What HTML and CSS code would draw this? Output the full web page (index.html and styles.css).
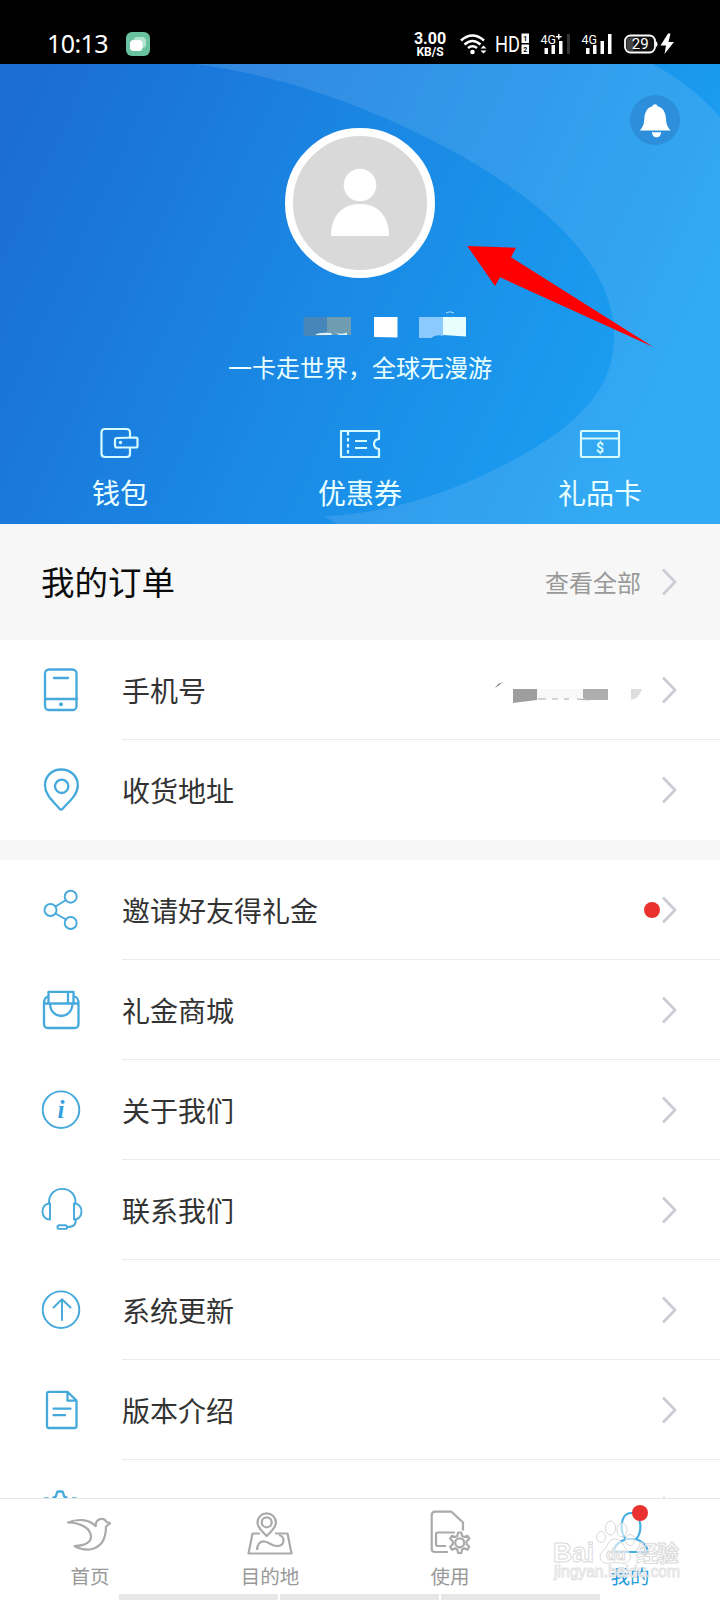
FILE: index.html
```html
<!DOCTYPE html>
<html lang="zh-CN">
<head>
<meta charset="utf-8">
<title>我的</title>
<link rel="stylesheet" href="styles.css">
</head>
<body>
<div class="screen">
  <header class="status">
    <span class="clock">10:13</span>
    <svg class="app-badge" viewBox="0 0 24 24"><rect width="24" height="24" rx="6" fill="#68c2a0"/><rect x="7.500" y="5" width="12.500" height="11" rx="4" fill="#aee3cd"/><rect x="4" y="8" width="12.500" height="11" rx="3.500" fill="#fff"/></svg>
    <div class="speed"><b class="speed-num">3.00</b><b class="speed-unit">KB/S</b></div>
    <svg class="signals" viewBox="0 0 216 24" fill="#fff">
      <g fill="none" stroke="#fff" stroke-width="2.600"><path d="M1 8.500Q12.500-1.500 24 8.500"/><path d="M4.500 12.500Q12.500 5.500 20.500 12.500"/><path d="M8 16Q12.500 12.500 17 16"/></g>
      <circle cx="12.500" cy="20" r="2.300"/><path d="M20.500 16.500l3-3 3 3zM20.500 18.500l3 3 3-3z"/>
      <text x="35" y="20" class="sig-hd" textLength="25" lengthAdjust="spacingAndGlyphs">HD</text>
      <rect x="61.500" y="1.500" width="7.500" height="9.500"/><rect x="61.500" y="12.500" width="7.500" height="9.500"/>
      <text x="63.300" y="8.800" class="sig-sim">1</text><text x="63.300" y="19.800" class="sig-sim">2</text>
      <text x="80.500" y="11.500" class="sig-gen" textLength="15.500" lengthAdjust="spacingAndGlyphs">4G</text><path d="M96 4h5.500v1.500h-5.500zM98 2h1.500v5.500h-1.500z"/>
      <rect x="84.500" y="16" width="3.500" height="6"/><rect x="91.500" y="13" width="3.500" height="9"/><rect x="99" y="9" width="3.500" height="13"/><rect x="107" y="2" width="3" height="20" fill="#333"/>
      <text x="121.500" y="11.500" class="sig-gen" textLength="15.500" lengthAdjust="spacingAndGlyphs">4G</text>
      <rect x="126" y="16" width="3.500" height="6"/><rect x="133" y="13" width="3.500" height="9"/><rect x="140.500" y="9" width="3.500" height="13"/><rect x="148" y="2" width="3.500" height="20"/>
      <rect x="165" y="3.500" width="30" height="17" rx="5.500" fill="#111" stroke="#fff" stroke-width="1.800"/><path d="M166.500 9q0-3.500 4-3.500h3v13.500h-3q-4 0-4-3.500z" fill="#444"/><path d="M195.500 9q2 .5 2 3.200t-2 3.200z"/>
      <text x="180.200" y="17.200" text-anchor="middle" class="sig-bat">29</text>
      <path d="M208 1.500L200.500 13.500h5.500l-1.500 8.500L214 10h-5.500l2-8.500z"/>
    </svg>
  </header>

  <section class="hero">
    <svg class="hero-bg" viewBox="0 64 720 460">
      <defs><linearGradient id="base" gradientUnits="userSpaceOnUse" x1="0" y1="120" x2="650" y2="420"><stop offset="0" stop-color="#1b6cd3"/><stop offset=".5" stop-color="#1a88e4"/><stop offset="1" stop-color="#1aa0f3"/></linearGradient></defs>
      <rect y="64" width="720" height="460" fill="url(#base)"/>
      <path fill="#fff" fill-opacity=".105" d="M195 64H653Q693 86 720 117V524H337L324 516C414 514 510 467 560 431C596 402 614 376 614 335C614 270 555 206 447 148C370 107 285 76 195 64Z"/>
    </svg>
    <div class="bell"><svg class="bell-icon" viewBox="0 0 49 49"><path d="M24.500 9c1.300 0 2.300.8 2.500 2 6 1.500 8 7 8.300 12.500.3 5.500 1.700 8.500 4.700 11.300H9.500c3-2.800 4.200-5.800 4.500-11.300.3-5.500 2.200-11 8-12.500.2-1.200 1.200-2 2.500-2zM21.500 36.500h9q-.3 5-4.500 5t-4.500-5z" fill="#fff"/></svg></div>
    <div class="avatar"><svg class="avatar-icon" viewBox="0 0 134 134"><circle cx="67" cy="49" r="16.300" fill="#fff"/><path d="M38 100C38 79 50 68 67 68S96 79 96 100Z" fill="#fff"/></svg></div>
    <svg class="name-mask" viewBox="0 0 168 32"><path fill="#4686b9" d="M5.500 8H29v19H5.500z"/><path fill="#709cb1" d="M29 8h24v18H29z"/><path d="M18 25q7-2 15-1l1 2H18zM37 22.500q4 4 12 1v2.500H41z" fill="#d9f2f8"/><path fill="#fff" d="M76 8h23.500v20.500L76 28z"/><path fill="#8cc9ff" d="M121 8h24v19q-7-2-12 2h-12z"/><path fill="#e7feff" d="M145 8h24v19.500l-24-1.500z"/><path d="M148 4q4-2.500 8 0" fill="none" stroke="#a8dcff"/></svg>
    <p class="slogan">一卡走世界，全球无漫游</p>
    <nav class="assets">
      <a class="asset"><svg class="asset-icon" viewBox="0 0 44 34"><path d="M32 11V6.500Q32 3 28.500 3H7Q3.500 3 3.500 6.500v21Q3.500 31 7 31h22Q32 31 32 27.500V22M19 12q-2 0-2 2v5.500q0 2 2 2H38q1.500 0 1.500-1.500V13q0-1.500-1.500-1.500z"/><circle cx="22.500" cy="16.500" r="1.700" class="solid"/></svg><span class="asset-name">钱包</span></a>
      <a class="asset"><svg class="asset-icon" viewBox="0 0 44 34"><path d="M3 5h38v8q-5 .5-5 5t5 5v8H3z"/><path d="M10 6v25" stroke-dasharray="3.500 2.500"/><path d="M17 15h12M17 22h12"/></svg><span class="asset-name">优惠券</span></a>
      <a class="asset"><svg class="asset-icon" viewBox="0 0 44 34"><rect x="3" y="5" width="38" height="26" rx="1"/><path d="M3 12.500h38"/><text x="22" y="27" text-anchor="middle" class="dollar">$</text></svg><span class="asset-name">礼品卡</span></a>
    </nav>
    <svg class="pointer" viewBox="0 0 188 104"><path d="M.3 1L49 2.700 44 12.300 186.300 102 33 32.300 28 41z" fill="#f00"/></svg>
  </section>

  <a class="orders"><h2 class="orders-title">我的订单</h2><span class="orders-all">查看全部</span><svg class="chevron" viewBox="0 0 16 28"><path d="M2 1.500L14 14 2 26.500"/></svg></a>

  <main class="list">
    <a class="row"><svg class="icon" viewBox="0 0 48 48"><rect x="8" y="3.500" width="31.500" height="40.500" rx="4"/><path d="M17 12h14M8 33h32"/><circle cx="24" cy="38.300" r="2" class="fill"/></svg>
      <div class="cell"><span class="label">手机号</span><svg class="phone-mask" viewBox="0 0 160 30"><path d="M5 11l3-4 5-2-5 4z" fill="#888"/><path fill="#9e9e9e" d="M23 12h24v11l-24 3z"/><path fill="#f8f8f8" d="M47 12h46v10H47z"/><path fill="#aeaeae" d="M93 12h25v11H99l-6-1.500z"/><path d="M48 22h8M62 22h6M74 22h5M87 22l12 1" stroke="#aaa" fill="none"/><path fill="#ddd" d="M141 12h11q-4 11-11 10.500z"/></svg><svg class="chevron" viewBox="0 0 16 28"><path d="M2 1.500L14 14 2 26.500"/></svg></div></a>
    <a class="row"><svg class="icon" viewBox="0 0 48 48"><path d="M24.200 3.500C14.500 3.500 8 10.500 8 19.500 8 29 17 36 22.500 42.700q1.600 1.600 3.200 0C31.500 36 40.800 29 40.800 19.500 40.800 10.500 34 3.500 24.200 3.500z"/><circle cx="24.700" cy="20.300" r="6.700"/></svg>
      <div class="cell last"><span class="label">收货地址</span><svg class="chevron" viewBox="0 0 16 28"><path d="M2 1.500L14 14 2 26.500"/></svg></div></a>
    <div class="gap"></div>
    <a class="row"><svg class="icon thin" viewBox="0 0 48 48"><circle cx="13.500" cy="24" r="6"/><circle cx="33.700" cy="10.700" r="6"/><circle cx="33.700" cy="37" r="6"/><path d="M18.500 20.500L29 14M18.500 27.500L29 33.500"/></svg>
      <div class="cell"><span class="label">邀请好友得礼金</span><i class="dot"></i><svg class="chevron" viewBox="0 0 16 28"><path d="M2 1.500L14 14 2 26.500"/></svg></div></a>
    <a class="row"><svg class="icon" viewBox="0 0 48 48"><path d="M7 17.500v20.500q0 4 4 4h26.500q4 0 4-4V17.500zM7 17.500q0-6 4-7M41.500 17.500q0-6-4-7M11.500 17.500V5.800h25v11.700M31 6v11M13 18c1 16 21.500 16 22.500 0"/></svg>
      <div class="cell"><span class="label">礼金商城</span><svg class="chevron" viewBox="0 0 16 28"><path d="M2 1.500L14 14 2 26.500"/></svg></div></a>
    <a class="row"><svg class="icon thin" viewBox="0 0 48 48"><circle cx="24" cy="23.700" r="18.300"/><text x="24" y="32" text-anchor="middle" class="info">i</text></svg>
      <div class="cell"><span class="label">关于我们</span><svg class="chevron" viewBox="0 0 16 28"><path d="M2 1.500L14 14 2 26.500"/></svg></div></a>
    <a class="row"><svg class="icon thin" viewBox="0 0 48 48"><path d="M12 17.500C11-2 39.500-2 38.500 17.500M13 17.500v16C3 34 3 17 13 17.500zM37 17.500v16C47 34 47 17 37 17.500zM38.500 33q1.500 8-8 8"/><rect x="20.500" y="39.300" width="9.500" height="3.600" rx="1.700"/></svg>
      <div class="cell"><span class="label">联系我们</span><svg class="chevron" viewBox="0 0 16 28"><path d="M2 1.500L14 14 2 26.500"/></svg></div></a>
    <a class="row"><svg class="icon thin" viewBox="0 0 48 48"><circle cx="24" cy="23.700" r="18.300"/><path d="M25 34V13.500M16.500 21.500L25 13.300l8.500 8.200"/></svg>
      <div class="cell"><span class="label">系统更新</span><svg class="chevron" viewBox="0 0 16 28"><path d="M2 1.500L14 14 2 26.500"/></svg></div></a>
    <a class="row"><svg class="icon" viewBox="0 0 48 48"><path d="M30.500 5.800H12q-2 0-2 2V40q0 2 2 2h25.500q2 0 2-2V14.500zM30.500 6v8.700h9M16.500 22.700h17M16.500 29.200h11.500"/></svg>
      <div class="cell"><span class="label">版本介绍</span><svg class="chevron" viewBox="0 0 16 28"><path d="M2 1.500L14 14 2 26.500"/></svg></div></a>
    <a class="row"><svg class="icon" viewBox="0 0 48 48"><path d="M8 12.500h3M16.500 11.500q2.500 0 3-3t1.500-3h4q1 0 1.500 3t3 3M36 12.500h3"/></svg>
      <div class="cell last"><svg class="chevron" viewBox="0 0 16 28"><path d="M2 1.500L14 14 2 26.500"/></svg></div></a>
  </main>

  <nav class="tabs">
    <a class="tab"><svg class="tab-icon" viewBox="0 0 48 48"><path d="M2 12.500C11 8.500 23 9 29.700 16.200 29.500 8 38 7 40.500 12l3.500 1.300-4 3.200c0 12.500-5 21-16 23Q16 40.300 8.500 36C20 35.500 25 31.500 25 26.500 24.500 18 14 12.500 2 12.500z"/></svg><span class="tab-name">首页</span></a>
    <a class="tab"><svg class="tab-icon" viewBox="0 0 48 48"><path d="M14 23.500H6.500L2.500 43.500h43l-4-20H29"/><path d="M20.700 26Q11.500 17.500 11.500 12.500a9.200 9.200 0 0 1 18.400 0Q29.900 17.500 20.700 26zM11 40Q11.500 31 18.500 31.500C23 32 26 36 31 36 39 36 39.500 26.500 33 25"/><circle cx="20.700" cy="12.300" r="5"/></svg><span class="tab-name">目的地</span></a>
    <a class="tab"><svg class="tab-icon" viewBox="0 0 48 48"><path d="M22 42H9q-3.300 0-3.300-3.300V5Q5.700 1.700 9 1.700h16.500L37 12.500v8M29 22.500H12q-2 0-2 2v9.500q0 2 2 2h8"/><path d="M31.300 26l.8-3.500h3.200l.8 3.500 2 1 3.400-1.200 1.800 2.900-2.700 2.500v3l2.700 2.500-1.800 2.900-3.400-1.200-2 1-.8 3.600h-3.200l-.8-3.600-2-1-3.400 1.200-1.800-2.900 2.700-2.500v-3l-2.700-2.500 1.800-2.900 3.400 1.200z"/><circle cx="33.700" cy="32.800" r="4.500"/></svg><span class="tab-name">使用</span></a>
    <a class="tab active"><i class="dot tab-dot"></i><svg class="tab-icon" viewBox="0 0 48 48"><path d="M20 29C13.500 24 13.500 3 25 3S36.500 24 30 29"/><path d="M20 29Q8.500 33 7.500 42h34.500Q41 33 30 29z"/></svg><span class="tab-name">我的</span></a>
    <div class="gesture"><i class="seg"></i><i class="seg"></i><i class="seg"></i></div>
    <svg class="watermark" viewBox="0 0 132 64">
      <g fill="#fff" fill-opacity=".6" stroke="#d9d9d9" stroke-width="1"><ellipse cx="53" cy="20" rx="4.500" ry="5.500"/><ellipse cx="62.500" cy="11" rx="5" ry="7"/><ellipse cx="74" cy="13" rx="5" ry="7"/><ellipse cx="82" cy="23" rx="4.500" ry="5.500"/><path d="M67 22c7 0 8 8 13 12 6 7 0 14-8 12q-5-1-10 0c-9 2-13-6-7-12 5-4 5-12 12-12z"/>
      <text x="5" y="45" class="wm-main" textLength="41" lengthAdjust="spacingAndGlyphs">Bai</text><text x="58" y="43" class="wm-du">du</text><text x="88" y="44" class="wm-cn" textLength="43">经验</text>
      <text x="6" y="60" class="wm-url" textLength="126" lengthAdjust="spacingAndGlyphs">jingyan.baidu.com</text></g>
    </svg>
  </nav>
</div>
</body>
</html>
```
FILE: styles.css
```css
* { box-sizing: border-box; }
body { margin: 0; background: #fff; font-family: "Liberation Sans", "Noto Sans CJK SC", sans-serif; }
i { font-style: normal; }
svg { display: block; flex: none; }
.screen { width: 720px; height: 1600px; display: flex; flex-direction: column; overflow: hidden; }

.status { flex: none; height: 64px; background: #000; color: #fff; display: flex; align-items: flex-start; padding: 32px 44px 0 47px; font-family: Roboto, sans-serif; }
.clock { width: 79px; font: 25px/23px "Noto Sans", sans-serif; letter-spacing: -.6px; }
.app-badge { width: 24px; height: 24px; }
.speed { margin-left: 262px; width: 36px; display: flex; flex-direction: column; align-items: center; }
.speed-num { font-size: 16px; line-height: 14px; }
.speed-unit { font-size: 12px; line-height: 12px; }
.signals { width: 216px; height: 24px; margin-left: 12px; }
.sig-hd { font-size: 22px; }
.sig-gen { font-size: 13px; }
.sig-sim { font-size: 7px; font-weight: 700; fill: #000; }
.sig-bat { font-size: 15px; }

.hero { flex: none; position: relative; height: 460px; display: flex; flex-direction: column; align-items: center; padding-top: 64px; color: #eaffff; }
.hero-bg { position: absolute; inset: 0; width: 720px; height: 460px; }
.bell { position: absolute; top: 31px; right: 40px; width: 50px; height: 50px; border-radius: 50%; background: #2d8fdb; }
.bell-icon { width: 50px; height: 50px; }
.avatar { position: relative; width: 150px; height: 150px; border: 8px solid #fff; border-radius: 50%; background: #d9d9d9; }
.avatar-icon { width: 134px; height: 134px; }
.name-mask { position: relative; width: 168px; height: 32px; margin: 31px 0 0 44px; }
.slogan { position: relative; margin: 12px 0 0; font-size: 24px; line-height: 32px; }
.assets { position: relative; align-self: stretch; display: flex; margin-top: 41px; }
.asset { flex: 1; display: flex; flex-direction: column; align-items: center; }
.asset-icon { width: 44px; height: 34px; fill: none; stroke: #d5faff; stroke-width: 2.200; stroke-linejoin: round; }
.solid { fill: #d5faff; stroke: none; }
.dollar { font: bold 14px Roboto, sans-serif; fill: #d5faff; stroke: none; }
.asset-name { margin-top: 17px; font-size: 28px; line-height: 36px; }
.pointer { position: absolute; left: 467px; top: 181px; width: 188px; height: 104px; }

.orders { flex: none; height: 116px; background: #f7f7f7; display: flex; align-items: center; padding: 0 43px 0 41px; }
.orders-title { flex: 1; margin: 4px 0 0; font-size: 33.500px; line-height: 44px; font-weight: 400; color: #0c0c0c; }
.orders-all { font-size: 24px; line-height: 32px; color: #999; margin: 3px 20px 0 0; }
.chevron { width: 16px; height: 28px; fill: none; stroke: #cbccd6; stroke-width: 2.800; }

.list { flex: 1; min-height: 0; overflow: hidden; }
.row { display: flex; align-items: center; height: 100px; padding-left: 37px; }
.icon { width: 48px; height: 48px; fill: none; stroke: #45a9dc; stroke-width: 2.300; stroke-linejoin: round; stroke-linecap: round; }
.thin { stroke-width: 1.900; }
.fill { fill: #45a9dc; stroke: none; }
.info { font: italic bold 25px "Liberation Serif", serif; fill: #35a0e0; stroke: none; }
.cell { flex: 1; height: 100px; margin-left: 37px; padding: 0 43px 0 0; border-bottom: 1px solid #ebebeb; display: flex; align-items: center; }
.last { border-bottom-color: transparent; }
.label { font-size: 28px; line-height: 38px; color: #333; padding-top: 7px; margin-right: auto; }
.cell .chevron { margin-left: auto; }
.phone-mask { width: 160px; height: 30px; margin: 5px 11px 0 0; }
.cell .phone-mask + .chevron, .cell .dot + .chevron { margin-left: 0; }
.dot { width: 16px; height: 16px; border-radius: 50%; background: #e9322f; margin-right: 1px; }
.gap { height: 20px; background: #f7f7f7; }

.tabs { flex: none; position: relative; height: 102px; border-top: 1px solid #e6e6e6; display: flex; background: #fff; }
.tab { position: relative; flex: 1; display: flex; flex-direction: column; align-items: center; padding-top: 11px; color: #999; }
.tab-icon { width: 48px; height: 48px; fill: none; stroke: #aaa; stroke-width: 2.200; stroke-linejoin: round; }
.tab-name { font-size: 19.500px; line-height: 26px; margin-top: 6px; }
.active { color: #249bda; }
.active .tab-icon { stroke: #42ade3; }
.tab-dot { position: absolute; left: 92px; top: 6px; margin: 0; z-index: 1; }
.gesture { position: absolute; left: 119px; bottom: 0; display: flex; gap: 2px; width: 481px; height: 6px; }
.seg { flex: 1; background: #e7e7e7; }
.watermark { position: absolute; left: 548px; top: 18px; width: 132px; height: 64px; overflow: visible; }
.wm-main { font: bold 28px "Liberation Sans", sans-serif; }
.wm-du { font: bold 16px "Liberation Sans", sans-serif; }
.wm-cn { font: bold 22px "Noto Sans CJK SC", sans-serif; }
.wm-url { font: 16px "Liberation Sans", sans-serif; stroke: #e4e4e4; }
```
